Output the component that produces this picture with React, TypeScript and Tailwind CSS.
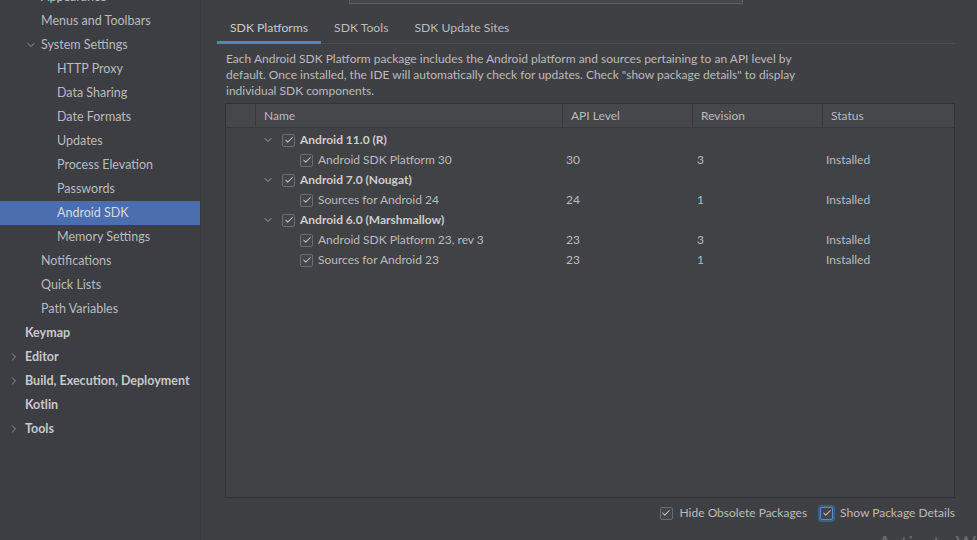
import { ChevronDown, ChevronRight, Check } from 'lucide-react';

type NavItem = { label: string; level: 1 | 2 | 3; bold?: boolean; chevron?: 'down' | 'right'; selected?: boolean };

const nav: NavItem[] = [
    { label: 'Appearance', level: 2 },
    { label: 'Menus and Toolbars', level: 2 },
    { label: 'System Settings', level: 2, chevron: 'down' },
    { label: 'HTTP Proxy', level: 3 },
    { label: 'Data Sharing', level: 3 },
    { label: 'Date Formats', level: 3 },
    { label: 'Updates', level: 3 },
    { label: 'Process Elevation', level: 3 },
    { label: 'Passwords', level: 3 },
    { label: 'Android SDK', level: 3, selected: true },
    { label: 'Memory Settings', level: 3 },
    { label: 'Notifications', level: 2 },
    { label: 'Quick Lists', level: 2 },
    { label: 'Path Variables', level: 2 },
    { label: 'Keymap', level: 1, bold: true },
    { label: 'Editor', level: 1, bold: true, chevron: 'right' },
    { label: 'Build, Execution, Deployment', level: 1, bold: true, chevron: 'right' },
    { label: 'Kotlin', level: 1, bold: true },
    { label: 'Tools', level: 1, bold: true, chevron: 'right' },
];

type Row = { name: string; group?: boolean; api?: string; rev?: string; status?: string };

const rows: Row[] = [
    { name: 'Android 11.0 (R)', group: true },
    { name: 'Android SDK Platform 30', api: '30', rev: '3', status: 'Installed' },
    { name: 'Android 7.0 (Nougat)', group: true },
    { name: 'Sources for Android 24', api: '24', rev: '1', status: 'Installed' },
    { name: 'Android 6.0 (Marshmallow)', group: true },
    { name: 'Android SDK Platform 23, rev 3', api: '23', rev: '3', status: 'Installed' },
    { name: 'Sources for Android 23', api: '23', rev: '1', status: 'Installed' },
];

function Box({ focus }: { focus?: boolean }) {
    return (
        <span
            className={`flex items-center justify-center w-[13px] h-[13px] rounded-[2px] border bg-[#43454a] ${focus ? 'border-[#5a8ac6] ring-2 ring-[#3d6185]' : 'border-[#6b6d70]'}`}
        >
            <Check className="w-[10px] h-[10px] text-[#c4c4c4]" strokeWidth={2.5} />
        </span>
    );
}

export default function App() {
    return (
        <div
            className="relative w-[977px] h-[540px] overflow-hidden flex bg-[#3f4044] text-[#bbbbbb] text-[12px]"
            style={{ fontFamily: 'Lato, "Liberation Sans", sans-serif' }}
        >
            {/* sidebar */}
            <div className="w-[201px] shrink-0 bg-[#3c3e44] border-r border-[#37393d] text-[12.5px]">
                <div className="-mt-[15px]">
                    {nav.map((n) => {
                        const pad = n.level === 1 ? 'pl-[25px]' : n.level === 2 ? 'pl-[41px]' : 'pl-[57px]';
                        return (
                            <div
                                key={n.label}
                                className={`relative h-[24px] flex items-center whitespace-nowrap ${pad} ${n.selected ? 'bg-[#4b6eaf] text-[#d6d9de]' : ''} ${n.bold ? 'font-bold text-[#c8c8c8]' : ''}`}
                            >
                                {n.chevron === 'down' && (
                                    <ChevronDown className="absolute left-[25px] w-[12px] h-[12px] text-[#9a9a9a]" />
                                )}
                                {n.chevron === 'right' && (
                                    <ChevronRight className="absolute left-[8px] w-[12px] h-[12px] text-[#9a9a9a]" />
                                )}
                                {n.label}
                            </div>
                        );
                    })}
                </div>
            </div>

            {/* main */}
            <div className="flex-1 flex flex-col pl-[16px] pr-[23px]">
                <div className="h-[4px] ml-[132px] w-[394px] border border-t-0 border-[#5e6064] bg-[#45474a]" />
                <div className="mt-[8px] flex border-b border-[#4a4c50] h-[32px] text-[12.2px]">
                    <div className="relative px-[13px] flex items-center pt-[1px] text-[#c8c8c8]">
                        SDK Platforms
                        <span className="absolute left-0 right-0 bottom-[-1px] h-[3px] bg-[#4a88c7]" />
                    </div>
                    <div className="px-[13px] flex items-center pt-[1px]">SDK Tools</div>
                    <div className="px-[13px] flex items-center pt-[1px]">SDK Update Sites</div>
                </div>

                <div className="pl-[9px] pt-[7px] leading-[16px] whitespace-nowrap">
                    Each Android SDK Platform package includes the Android platform and sources pertaining to an API level by
                    <br />
                    default. Once installed, the IDE will automatically check for updates. Check "show package details" to display
                    <br />
                    individual SDK components.
                </div>

                <div className="ml-[8px] mt-[4px] h-[395px] w-[730px] border border-[#323336] bg-[#414246] flex flex-col">
                    <div className="flex h-[24px] bg-[#45474b] border-b border-[#37393c]">
                        <div className="w-[30px] border-r border-[#37393c]" />
                        <div className="w-[307px] border-r border-[#37393c] pl-[8px] pt-[1px] flex items-center">Name</div>
                        <div className="w-[130px] border-r border-[#37393c] pl-[8px] pt-[1px] flex items-center">API Level</div>
                        <div className="w-[130px] border-r border-[#37393c] pl-[8px] pt-[1px] flex items-center">Revision</div>
                        <div className="flex-1 pl-[8px] pt-[1px] flex items-center">Status</div>
                    </div>
                    <div className="pt-[2px]">
                        {rows.map((r) => (
                            <div key={r.name} className="flex h-[20px] items-center">
                                <div className="w-[337px] flex items-center whitespace-nowrap">
                                    {r.group ? (
                                        <>
                                            <ChevronDown className="ml-[36px] w-[12px] h-[12px] text-[#a0a0a0]" />
                                            <span className="ml-[8px]"><Box /></span>
                                            <span className="ml-[5px] font-bold text-[#cdcdcd]">{r.name}</span>
                                        </>
                                    ) : (
                                        <>
                                            <span className="ml-[74px]"><Box /></span>
                                            <span className="ml-[5px]">{r.name}</span>
                                        </>
                                    )}
                                </div>
                                <div className="w-[130px] pl-[3px]">{r.api}</div>
                                <div className="w-[130px] pl-[4px]">{r.rev}</div>
                                <div className="flex-1 pl-[3px]">{r.status}</div>
                            </div>
                        ))}
                    </div>
                </div>

                <div className="flex justify-end items-center mt-[6px] h-[18px] whitespace-nowrap">
                    <Box />
                    <span className="ml-[7px] mr-[13px]">Hide Obsolete Packages</span>
                    <Box focus />
                    <span className="ml-[7px]">Show Package Details</span>
                </div>
            </div>

            <div className="absolute left-[878px] top-[527px] text-[20px] text-[#6b6c70] whitespace-nowrap">
                Activate Windows
            </div>
        </div>
    );
}
